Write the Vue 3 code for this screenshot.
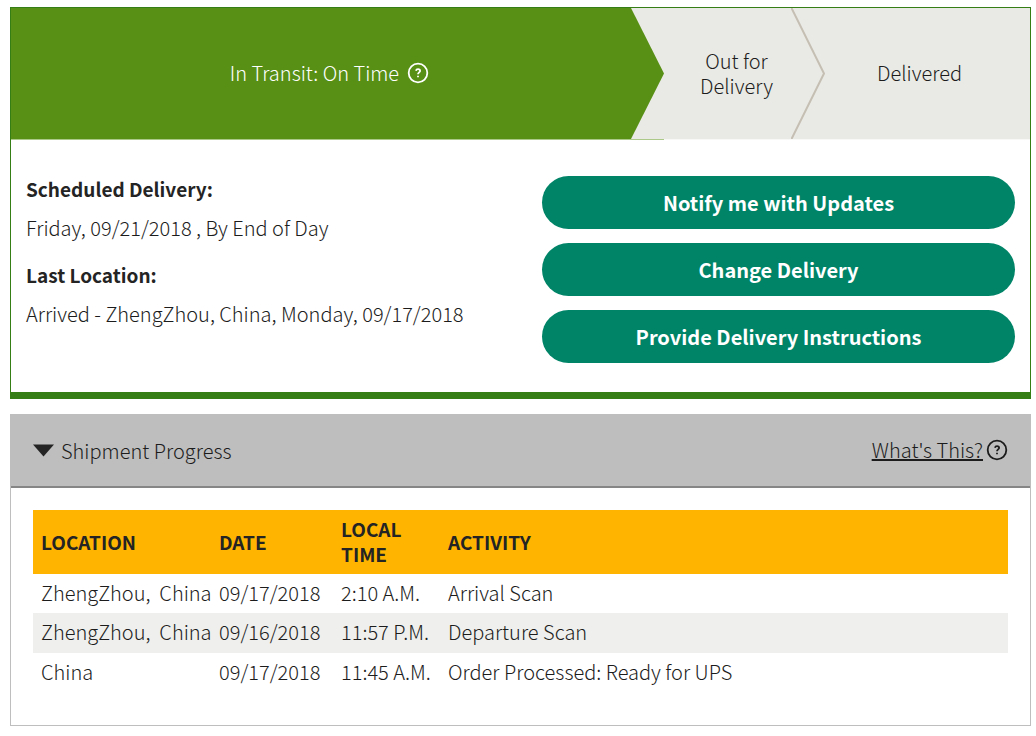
<script setup>
const actions = ['Notify me with Updates', 'Change Delivery', 'Provide Delivery Instructions']

const scans = [
  { location: 'ZhengZhou,\u00a0 China', date: '09/17/2018', time: '2:10 A.M.', activity: 'Arrival Scan' },
  { location: 'ZhengZhou,\u00a0 China', date: '09/16/2018', time: '11:57 P.M.', activity: 'Departure Scan' },
  { location: 'China', date: '09/17/2018', time: '11:45 A.M.', activity: 'Order Processed: Ready for UPS' },
]
</script>

<template>
  <main class="tracking">
    <section class="status">
      <ol class="steps">
        <li class="step current">
          <span class="label">In Transit: On Time</span>
          <button class="help" type="button" aria-label="Help">
            <svg viewBox="0 0 22 22" aria-hidden="true">
              <circle cx="11" cy="11" r="9.3" />
              <path d="M8.900 8.700C9.200 7.700 9.900 7.200 11 7.200c1.300 0 2.100.7 2.100 1.700 0 1.500-2.100 1.600-2.100 3.400M11 13.700v1.600" />
            </svg>
          </button>
        </li>
        <li class="step next">
          <span class="label">Out for<br>Delivery</span>
          <svg class="chevron" viewBox="0 0 34 131" preserveAspectRatio="none" aria-hidden="true">
            <path d="M0.500 0L33 65.500 0.500 131" />
          </svg>
        </li>
        <li class="step">
          <span class="label">Delivered</span>
        </li>
      </ol>

      <div class="summary">
        <dl class="facts">
          <dt>Scheduled Delivery:</dt>
          <dd>Friday, 09/21/2018 , By End of Day</dd>
          <dt>Last Location:</dt>
          <dd>Arrived - ZhengZhou, China, Monday, 09/17/2018</dd>
        </dl>
        <div class="actions">
          <button v-for="action in actions" :key="action" class="action" type="button">{{ action }}</button>
        </div>
      </div>
    </section>

    <section class="progress">
      <header class="bar">
        <button class="toggle" type="button" aria-expanded="true">
          <svg class="caret" viewBox="0 0 21 13" aria-hidden="true"><path d="M0 0.500h21L10.500 12.500z" /></svg>
          <span>Shipment Progress</span>
        </button>
        <a class="about" href="#">
          <span class="about-text">What's This?</span>
          <svg class="about-icon" viewBox="0 0 22 22" aria-hidden="true">
            <circle cx="11" cy="11" r="9.3" />
            <path d="M8.900 8.700C9.200 7.700 9.900 7.200 11 7.200c1.300 0 2.100.7 2.100 1.700 0 1.500-2.100 1.600-2.100 3.400M11 13.700v1.600" />
          </svg>
        </a>
      </header>

      <div class="details">
        <table class="scans">
          <colgroup>
            <col class="col-location">
            <col class="col-date">
            <col class="col-time">
            <col>
          </colgroup>
          <thead>
            <tr>
              <th scope="col">LOCATION</th>
              <th scope="col">DATE</th>
              <th scope="col">LOCAL<br>TIME</th>
              <th scope="col">ACTIVITY</th>
            </tr>
          </thead>
          <tbody>
            <tr v-for="(scan, i) in scans" :key="i">
              <td>{{ scan.location }}</td>
              <td>{{ scan.date }}</td>
              <td>{{ scan.time }}</td>
              <td>{{ scan.activity }}</td>
            </tr>
          </tbody>
        </table>
      </div>
    </section>
  </main>
</template>

<style>
body {
  background: #fff;
}
</style>

<style scoped>
.tracking {
  box-sizing: border-box;
  padding: 7px 5px 10px 10px;
  color: #1c1c1c;
  font-family: "Noto Sans CJK SC", "Noto Sans", sans-serif;
  font-size: 20px;
  font-weight: 300;
  line-height: 25px;
}

button {
  margin: 0;
  padding: 0;
  border: 0;
  background: none;
  color: inherit;
  font: inherit;
  cursor: pointer;
}

.status {
  border: 1px solid #357d15;
  border-bottom-width: 7px;
}

.steps {
  display: grid;
  grid-template-columns: 653fr 161fr 205fr;
  margin: 0;
  padding: 0;
  list-style: none;
}

.step {
  position: relative;
  box-sizing: border-box;
  display: flex;
  align-items: center;
  justify-content: center;
  min-height: 132px;
  padding: 0 16px 2px 0;
  border-bottom: 1px solid #f8f8f7;
  background: #e9eae5;
  text-align: center;
}

.current {
  gap: 8px;
  border-bottom-color: #acc98a;
  color: #fff;
}

.current::before {
  content: "";
  position: absolute;
  inset: 0;
  background: #589016;
  clip-path: polygon(0 0, calc(100% - 33px) 0, 100% 50%, calc(100% - 33px) 100%, 0 100%);
}

.label,
.help {
  position: relative;
}

.help,
.about-icon {
  display: block;
  width: 22px;
  height: 22px;
}

.help svg {
  display: block;
}

.help svg,
.about-icon {
  fill: none;
  stroke: currentColor;
  stroke-width: 1.8;
}

.chevron {
  position: absolute;
  top: 0;
  right: 0;
  width: 34px;
  height: 100%;
  fill: none;
  stroke: #c5beb3;
  stroke-width: 2;
}

.summary {
  display: grid;
  grid-template-columns: minmax(0, 516fr) minmax(0, 473fr);
  padding: 36px 15px 29px;
}

.facts {
  margin: 0;
}

dt {
  margin-bottom: 14px;
  color: #242424;
  font-size: 19px;
  font-weight: 700;
}

dd {
  margin: 0 0 22px;
}

.actions {
  display: flex;
  flex-direction: column;
  gap: 14px;
}

.action {
  min-height: 53px;
  padding-bottom: 1px;
  border-radius: 27px;
  background: #008468;
  color: #fff;
  font-size: 20px;
  font-weight: 700;
}

.progress {
  margin-top: 15px;
  border: 1px solid #bebebe;
}

.bar {
  display: flex;
  align-items: center;
  justify-content: space-between;
  min-height: 71px;
  padding: 0 22px;
  border-bottom: 2px solid #868686;
  background: #bebebe;
}

.toggle,
.about {
  display: flex;
  align-items: center;
}

.toggle {
  gap: 7px;
}

.caret {
  width: 21px;
  height: 13px;
  fill: #242424;
}

.about {
  gap: 3px;
  padding-bottom: 2px;
  color: inherit;
}

.about-text {
  text-decoration: underline;
}

.details {
  padding: 22px 22px 33px;
}

.scans {
  width: 100%;
  border-collapse: collapse;
  table-layout: fixed;
}

.col-location {
  width: 178px;
}

.col-date {
  width: 122px;
}

.col-time {
  width: 107px;
}

th,
td {
  padding: 6px 0 8px 8px;
  text-align: left;
  white-space: nowrap;
}

th {
  background: #ffb500;
  color: #242424;
  font-size: 19px;
  font-weight: 700;
}

tbody tr:nth-child(even) td {
  border-bottom: 1px solid #efefed;
  background: #efefed;
}
</style>
